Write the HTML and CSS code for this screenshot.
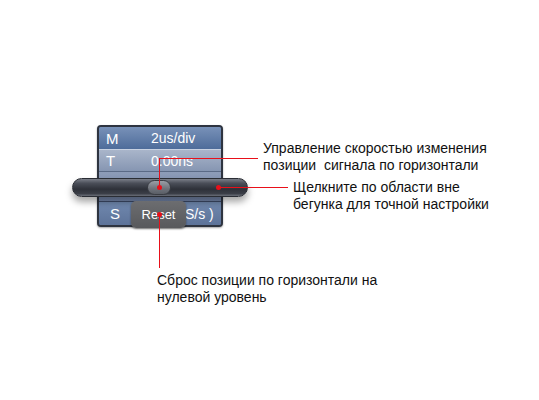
FILE: index.html
```html
<!DOCTYPE html>
<html lang="ru">
<head>
<meta charset="utf-8">
<link rel="stylesheet" href="styles.css">
</head>
<body>
<div class="stage">
  <div class="panel">
    <div class="row row-m"><span class="lbl">M</span><span class="val">2us/div</span></div>
    <div class="row row-t"><span class="lbl">T</span><span class="val">0.00ns</span></div>
    <div class="row row-gap"></div>
    <div class="row row-s"><span class="lbl">S</span><span class="val val-s">S/s )</span></div>
  </div>
  <div class="slider"><div class="thumb"></div></div>
  <div class="reset">Reset</div>

  <div class="dot dot1"></div>
  <div class="line l1v"></div>
  <div class="line l1h"></div>
  <div class="dot dot2"></div>
  <div class="line l2h"></div>
  <div class="dot dot3"></div>
  <div class="line l3v"></div>

  <p class="note note1">Управление скоростью изменения<br>позиции&nbsp; сигнала по горизонтали</p>
  <p class="note note2">Щелкните по области вне<br>бегунка для точной настройки</p>
  <p class="note note3">Сброс позиции по горизонтали на<br>нулевой уровень</p>
</div>
</body>
</html>
```

FILE: styles.css
```css
html, body {
  margin: 0;
  padding: 0;
  background: #ffffff;
}
.stage {
  position: relative;
  width: 539px;
  height: 400px;
  overflow: hidden;
  font-family: "Liberation Sans", Arial, sans-serif;
}
.panel {
  position: absolute;
  left: 97px;
  top: 125px;
  width: 122px;
  height: 98px;
  border: 2px solid #2e3440;
  border-radius: 4px;
  overflow: hidden;
  display: flex;
  flex-direction: column;
  background: #6a80a8;
  box-shadow: 0 1px 2px rgba(0,0,0,0.35);
}
.row {
  display: flex;
  align-items: center;
  color: #ffffff;
  font-size: 14px;
}
.lbl {
  width: 42px;
  padding-left: 7px;
  box-sizing: border-box;
  font-size: 15px;
}
.val {
  flex: 1;
  padding-left: 10px;
}
.row-m {
  height: 22px;
  background: linear-gradient(#7891b8, #4e6c9a);
  border-bottom: 1px solid #c8d2e2;
}
.row-t {
  height: 21px;
  background: linear-gradient(#a9b5ca, #8696b2);
  border-bottom: 1px solid #5a6a86;
}
.row-gap {
  height: 29px;
  background: linear-gradient(#8d9cb8, #7486aa);
  border-bottom: 1px solid #3c4a66;
}
.row-s {
  flex: 1;
  background: linear-gradient(#7088ae, #5d7399);
}
.row-s .lbl { padding-left: 11px; }
.val-s { padding-left: 44px; }

.slider {
  position: absolute;
  left: 72px;
  top: 178px;
  width: 176px;
  height: 19px;
  box-sizing: border-box;
  border-radius: 10px;
  border: 1px solid #2a2d34;
  background: linear-gradient(#7a7e88 0%, #4a4e58 25%, #2e3139 60%, #3a3d46 85%, #6a6e78 100%);
  box-shadow: 0 5px 7px rgba(0,0,0,0.35);
}
.thumb {
  position: absolute;
  left: 74px;
  top: 1px;
  width: 24px;
  height: 15px;
  border-radius: 8px;
  background: linear-gradient(#9a9ea6, #6e727a 60%, #5a5e66);
  border: 1px solid #3a3d44;
  box-sizing: border-box;
}
.reset {
  position: absolute;
  left: 131px;
  top: 201px;
  width: 55px;
  height: 27px;
  border-radius: 5px;
  background: linear-gradient(#6c6d70, #58595c);
  box-shadow: 0 1px 2px rgba(0,0,0,0.5);
  color: #ffffff;
  font-size: 13px;
  line-height: 27px;
  text-align: center;
}
.dot {
  position: absolute;
  width: 5px;
  height: 5px;
  border-radius: 50%;
  background: #e8101a;
}
.dot1 { left: 157px; top: 185px; }
.dot2 { left: 216px; top: 185px; }
.dot3 { left: 157px; top: 212px; }
.line {
  position: absolute;
  background: #e8101a;
}
.l1v { left: 159px; top: 158px; width: 1px; height: 29px; }
.l1h { left: 159px; top: 158px; width: 99px; height: 1px; }
.l2h { left: 218px; top: 187px; width: 70px; height: 1px; }
.l3v { left: 159px; top: 214px; width: 1px; height: 54px; }

.note {
  position: absolute;
  margin: 0;
  font-size: 14px;
  line-height: 17px;
  color: #111111;
  white-space: nowrap;
}
.note1 { left: 263px; top: 140px; }
.note2 { left: 293px; top: 179px; }
.note3 { left: 157px; top: 272px; }
```
